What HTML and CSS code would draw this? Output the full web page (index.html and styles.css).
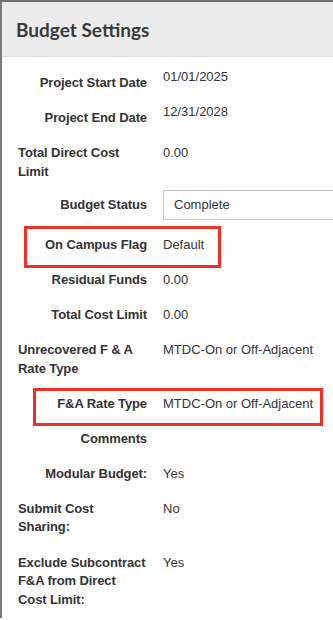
FILE: index.html
```html
<!DOCTYPE html>
<html lang="en">
<head>
    <meta charset="UTF-8">
    <meta name="viewport" content="width=device-width, initial-scale=1.0">
    <title>Budget Settings</title>
    <link rel="stylesheet" href="styles.css">
</head>
<body>
    <div class="panel">
        <div class="panel-header">
            <h2>Budget Settings</h2>
        </div>
        <div class="panel-body">
            <div class="row">
                <div class="label"><span>Project Start Date</span></div>
                <div class="value raised">01/01/2025</div>
            </div>
            <div class="row">
                <div class="label"><span>Project End Date</span></div>
                <div class="value raised">12/31/2028</div>
            </div>
            <div class="row">
                <div class="label"><span>Total Direct Cost Limit</span></div>
                <div class="value">0.00</div>
            </div>
            <div class="row row-select">
                <div class="label"><span>Budget Status</span></div>
                <div class="value"><div class="select-box">Complete</div></div>
            </div>
            <div class="row">
                <div class="label"><span>On Campus Flag</span></div>
                <div class="value">Default</div>
                <div class="highlight highlight-campus"></div>
            </div>
            <div class="row">
                <div class="label"><span>Residual Funds</span></div>
                <div class="value">0.00</div>
            </div>
            <div class="row">
                <div class="label"><span>Total Cost Limit</span></div>
                <div class="value">0.00</div>
            </div>
            <div class="row">
                <div class="label"><span>Unrecovered F &amp; A Rate Type</span></div>
                <div class="value">MTDC-On or Off-Adjacent</div>
            </div>
            <div class="row">
                <div class="label"><span>F&amp;A Rate Type</span></div>
                <div class="value">MTDC-On or Off-Adjacent</div>
                <div class="highlight highlight-rate"></div>
            </div>
            <div class="row">
                <div class="label"><span>Comments</span></div>
                <div class="value"></div>
            </div>
            <div class="row">
                <div class="label"><span>Modular Budget:</span></div>
                <div class="value">Yes</div>
            </div>
            <div class="row">
                <div class="label"><span>Submit Cost Sharing:</span></div>
                <div class="value">No</div>
            </div>
            <div class="row">
                <div class="label"><span>Exclude Subcontract F&amp;A from Direct Cost Limit:</span></div>
                <div class="value">Yes</div>
            </div>
        </div>
    </div>
</body>
</html>
```

FILE: styles.css
```css
body {
    margin: 0;
    font-family: "Liberation Sans", Arial, sans-serif;
    color: #333;
    background: #fff;
    overflow: hidden;
}
.panel {
    border-top: 2px solid #6f6f6f;
    border-left: 2px solid #7a7a7a;
    height: 618px;
    box-sizing: border-box;
}
.panel-header {
    background: #ececec;
    border-bottom: 1px solid #dedede;
    height: 54px;
    display: flex;
    align-items: center;
    padding-left: 14px;
}
.panel-header h2 {
    margin: 0;
    font-family: Lato, sans-serif;
    font-size: 19px;
    font-weight: 700;
    color: #3a3a3a;
}
.panel-body {
    padding-top: 9px;
}
.row {
    position: relative;
    display: grid;
    grid-template-columns: 129px 1fr;
    column-gap: 16px;
    padding: 8px 0 8.6px 16px;
    font-size: 13px;
    line-height: 18.5px;
}
.label {
    display: flex;
    justify-content: flex-end;
    font-weight: bold;
    letter-spacing: -0.1px;
}
.label span {
    display: inline-block;
}
.value {
    white-space: nowrap;
}
.raised {
    margin-top: -6px;
}
.row-select {
    padding: 0 0 8px 16px;
    align-items: center;
}
.select-box {
    width: 200px;
    height: 28px;
    border: 1px solid #ccc;
    line-height: 28px;
    padding-left: 10px;
}
.highlight {
    position: absolute;
    border: 3px solid #ee3124;
    pointer-events: none;
}
.highlight-campus {
    left: 22px;
    width: 191px;
    top: -2px;
    height: 36px;
}
.highlight-rate {
    left: 31px;
    width: 284px;
    top: 1px;
    height: 32px;
}
```
